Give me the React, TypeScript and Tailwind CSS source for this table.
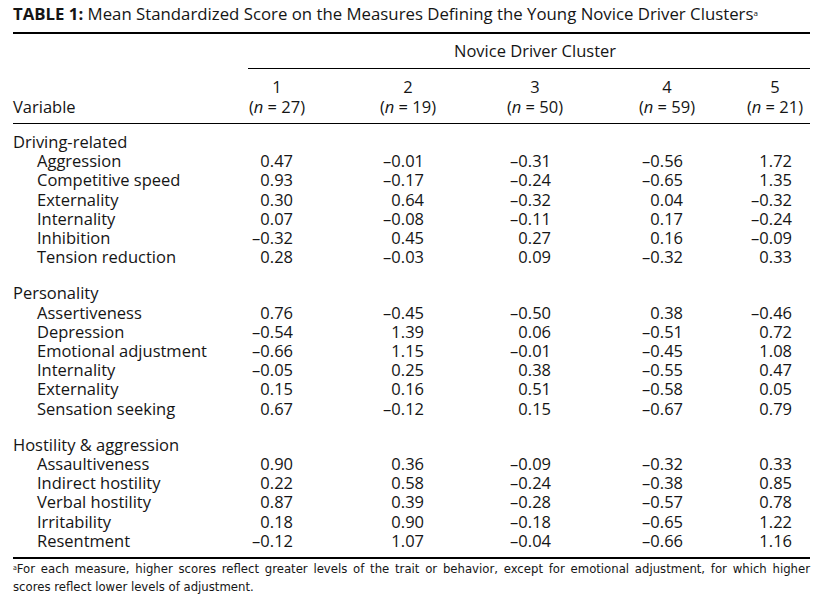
const groups = [
  {
    title: "Driving-related",
    rows: [
      ["Aggression", "0.47", "–0.01", "–0.31", "–0.56", "1.72"],
      ["Competitive speed", "0.93", "–0.17", "–0.24", "–0.65", "1.35"],
      ["Externality", "0.30", "0.64", "–0.32", "0.04", "–0.32"],
      ["Internality", "0.07", "–0.08", "–0.11", "0.17", "–0.24"],
      ["Inhibition", "–0.32", "0.45", "0.27", "0.16", "–0.09"],
      ["Tension reduction", "0.28", "–0.03", "0.09", "–0.32", "0.33"],
    ],
  },
  {
    title: "Personality",
    rows: [
      ["Assertiveness", "0.76", "–0.45", "–0.50", "0.38", "–0.46"],
      ["Depression", "–0.54", "1.39", "0.06", "–0.51", "0.72"],
      ["Emotional adjustment", "–0.66", "1.15", "–0.01", "–0.45", "1.08"],
      ["Internality", "–0.05", "0.25", "0.38", "–0.55", "0.47"],
      ["Externality", "0.15", "0.16", "0.51", "–0.58", "0.05"],
      ["Sensation seeking", "0.67", "–0.12", "0.15", "–0.67", "0.79"],
    ],
  },
  {
    title: "Hostility & aggression",
    rows: [
      ["Assaultiveness", "0.90", "0.36", "–0.09", "–0.32", "0.33"],
      ["Indirect hostility", "0.22", "0.58", "–0.24", "–0.38", "0.85"],
      ["Verbal hostility", "0.87", "0.39", "–0.28", "–0.57", "0.78"],
      ["Irritability", "0.18", "0.90", "–0.18", "–0.65", "1.22"],
      ["Resentment", "–0.12", "1.07", "–0.04", "–0.66", "1.16"],
    ],
  },
];

const clusters = [
  { k: "1", n: "27" },
  { k: "2", n: "19" },
  { k: "3", n: "50" },
  { k: "4", n: "59" },
  { k: "5", n: "21" },
];

// right padding per column so values line up right of the header centre
const valuePad = ["pr-[47px]", "pr-[52px]", "pr-[43px]", "pr-[57px]", "pr-[18px]"];

const cols = "grid grid-cols-[201px_126px_136px_118px_146px_70px]";

export default function App() {
  return (
    <div className="h-[603px] w-[826px] bg-white pl-[13px] pr-[16px] pt-[4px] text-[#151515] [font-family:'Open_Sans',Lato,sans-serif]">
      <h1 className="whitespace-nowrap text-[16.8px] leading-[20px]">
        <span className="font-bold">TABLE 1:</span> Mean Standardized Score on the Measures Defining the Young Novice
        Driver Clusters<sup className="text-[8px]">a</sup>
      </h1>

      <div className="mt-[8px] border-t-2 border-black">
        <div className={cols}>
          <div />
          <div className="col-span-5 ml-[34px] border-b border-black pb-[7px] pl-[12px] pt-[7px] text-center text-[16.5px] leading-[20px]">
            Novice Driver Cluster
          </div>
        </div>

        <div className={`${cols} border-b border-black pb-[6px] pt-[8px] text-[16.5px] leading-[20px]`}>
          <div className="self-end">Variable</div>
          {clusters.map((c) => (
            <div key={c.k} className="text-center">
              <div>{c.k}</div>
              <div>
                (<span className="italic">n</span> = {c.n})
              </div>
            </div>
          ))}
        </div>

        <div className="flex flex-col gap-[17px] border-b-2 border-black pb-[7px] pt-[8px] text-[16.5px] leading-[19.2px]">
          {groups.map((g) => (
            <div key={g.title}>
              <div>{g.title}</div>
              {g.rows.map((r) => (
                <div key={r[0]} className={cols}>
                  <div className="pl-[24px]">{r[0]}</div>
                  {r.slice(1).map((v, i) => (
                    <div key={i} className={`text-right ${valuePad[i]}`}>
                      {v}
                    </div>
                  ))}
                </div>
              ))}
            </div>
          ))}
        </div>

        <div className="mt-[1px] text-[13px] leading-[18px] [font-family:'DejaVu_Sans_Condensed',sans-serif]">
          <p className="text-justify [text-align-last:justify]">
            <sup className="text-[7px]">a</sup>For each measure, higher scores reflect greater levels of the trait or
            behavior, except for emotional adjustment, for which higher
          </p>
          <p>scores reflect lower levels of adjustment.</p>
        </div>
      </div>
    </div>
  );
}
